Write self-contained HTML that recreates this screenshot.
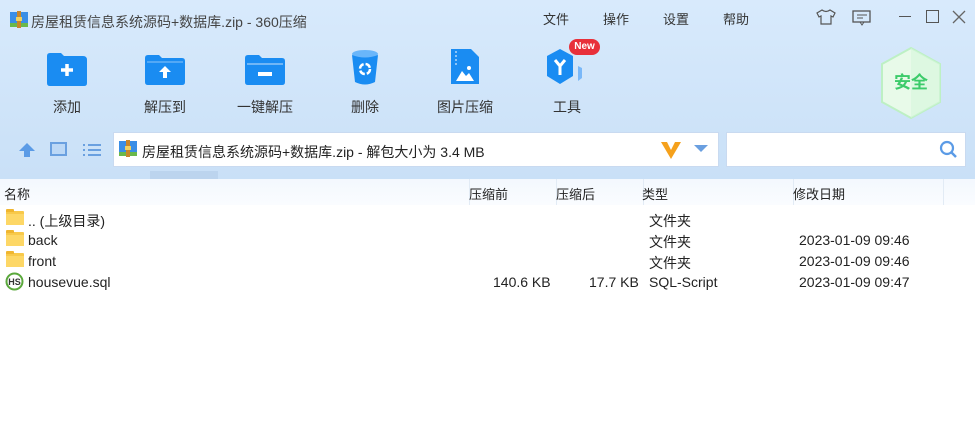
<!DOCTYPE html>
<html><head><meta charset="utf-8"><style>
*{margin:0;padding:0;box-sizing:border-box}
body{width:975px;height:436px;overflow:hidden;background:#fff;font-family:"Liberation Sans","Noto Sans CJK SC",sans-serif;color:#222;position:relative}
.top{position:absolute;left:0;top:0;width:975px;height:179px;background:linear-gradient(#d8eafc,#c9e0f7)}
.abs{position:absolute}
.t{font-size:14px;color:#333}
.tb{position:absolute;top:47px;width:80px;text-align:center}
.tb .lbl{position:absolute;top:50px;width:80px;text-align:center;font-size:14px;color:#333}
.hdr{position:absolute;top:179px;left:0;width:975px;height:26px;background:linear-gradient(#f3f8fe,#fafcff);font-size:13px}
.hdr span{position:absolute;top:5px}
.hdr i{position:absolute;top:0;width:1px;height:26px;background:#e2ebf5}
.row{position:absolute;left:0;height:21px;width:975px;font-size:14px}
.row span{position:absolute;top:2px}
.fold{position:absolute;left:6px;top:2px;width:18px;height:14px;background:#f8c94a;border-radius:1px}
.fold:before{content:"";position:absolute;left:0;top:-2px;width:8px;height:3px;background:#f0b630;border-radius:1px 1px 0 0}
.fold:after{content:"";position:absolute;left:0;top:3px;width:18px;height:11px;background:#fdd766}
</style></head><body>
<div class="top"></div>
<svg class="abs" style="left:10px;top:11px" width="18" height="17"><rect x="0" y="1" width="18" height="15" fill="#3a8ee6"/><rect x="0" y="12" width="18" height="4" fill="#6ab84a"/><rect x="7" y="0" width="4" height="17" fill="#c8862a"/><rect x="6" y="6" width="6" height="4" fill="#f0d060"/></svg>
<div class="abs" style="left:31px;top:12px;font-size:14px;color:#444">房屋租赁信息系统源码+数据库.zip - 360压缩</div>
<div class="abs t" style="left:543px;top:9px;font-size:13px">文件</div>
<div class="abs t" style="left:603px;top:9px;font-size:13px">操作</div>
<div class="abs t" style="left:663px;top:9px;font-size:13px">设置</div>
<div class="abs t" style="left:723px;top:9px;font-size:13px">帮助</div>
<svg class="abs" style="left:816px;top:9px" width="20" height="16"><path d="M6 1 L1 4 L3 8 L5 7 L5 15 L15 15 L15 7 L17 8 L19 4 L14 1 Q10 4 6 1Z" fill="none" stroke="#555" stroke-width="1.2"/></svg>
<svg class="abs" style="left:852px;top:10px" width="20" height="16"><rect x="1" y="1" width="17" height="11" fill="none" stroke="#555" stroke-width="1.3"/><path d="M5 5h10M5 8h6M8 12l2 3 2-3" stroke="#555" fill="none"/></svg>
<div class="abs" style="left:899px;top:16px;width:12px;height:1px;background:#555"></div>
<div class="abs" style="left:926px;top:10px;width:13px;height:13px;border:1.5px solid #555"></div>
<svg class="abs" style="left:952px;top:10px" width="14" height="14"><path d="M1 1L13 13M13 1L1 13" stroke="#666" stroke-width="1.3"/></svg>
<div class="tb" style="left:27px"><svg width="40" height="33" style="position:absolute;left:20px;top:6px"><path d="M0 3Q0 0 3 0H14L17 3H36Q40 3 40 7V30Q40 33 37 33H3Q0 33 0 30Z" fill="#1a8cf2"/><path d="M14 17h12M20 11v12" stroke="#fff" stroke-width="3.5"/></svg><div class="lbl">添加</div></div>
<div class="tb" style="left:125px"><svg width="40" height="30" style="position:absolute;left:20px;top:8px"><path d="M0 3Q0 0 3 0H14L17 3H37Q40 3 40 6V27Q40 30 37 30H3Q0 30 0 27Z" fill="#1a8cf2"/><path d="M2 7H38" stroke="#8cc4f8" stroke-width="1"/><path d="M20 11l-6 6h4v6h4v-6h4z" fill="#fff"/></svg><div class="lbl">解压到</div></div>
<div class="tb" style="left:225px"><svg width="40" height="30" style="position:absolute;left:20px;top:8px"><path d="M0 3Q0 0 3 0H14L17 3H37Q40 3 40 6V27Q40 30 37 30H3Q0 30 0 27Z" fill="#1a8cf2"/><path d="M2 9H38" stroke="#8cc4f8" stroke-width="1.5"/><rect x="13" y="17" width="14" height="4" fill="#fff"/></svg><div class="lbl">一键解压</div></div>
<div class="tb" style="left:325px"><svg width="28" height="36" style="position:absolute;left:26px;top:3px"><ellipse cx="14" cy="4" rx="13" ry="4" fill="#6ab6fa"/><path d="M1 5L4 32Q14 37 24 32L27 5Q14 10 1 5Z" fill="#1a8cf2"/><circle cx="14" cy="19" r="5" fill="none" stroke="#fff" stroke-width="2.5" stroke-dasharray="6 2"/></svg><div class="lbl">删除</div></div>
<div class="tb" style="left:425px"><svg width="28" height="36" style="position:absolute;left:26px;top:2px"><path d="M0 0H20L28 8V35H0Z" fill="#1a8cf2"/><path d="M5 2v2M5 6v2M5 10v2M5 14v2" stroke="#8cc4f8" stroke-width="2"/><path d="M5 32L11 22L15 27L18 24L23 32Z" fill="#fff"/><circle cx="18" cy="19" r="2" fill="#fff"/></svg><div class="lbl">图片压缩</div></div>
<div class="tb" style="left:527px"><svg width="36" height="38" style="position:absolute;left:20px;top:2px"><path d="M31 17l4 2v10l-4 3z" fill="#7ab8f8"/><path d="M13 0L26 7V27L13 35L0 27V7Z" fill="#1a8cf2"/><path d="M8 11L13 17L18 11M13 17V26" stroke="#fff" stroke-width="3" fill="none"/></svg>
<div style="position:absolute;left:42px;top:-8px;width:31px;height:16px;background:#e8303a;border-radius:8px;color:#fff;font-size:10px;line-height:16px;font-weight:bold">New</div>
<div class="lbl">工具</div></div>
<svg class="abs" style="left:880px;top:46px" width="62" height="74"><path d="M31 2L60 18V56L31 72L2 56V18Z" fill="#e8fae9" stroke="#bdf0c4" stroke-width="2"/><path d="M31 2L60 18V56L31 72Z" fill="#d6f6dc" opacity=".6"/><text x="31" y="42" text-anchor="middle" font-size="17" font-weight="bold" fill="#3ccb6a" font-family="Noto Sans CJK SC,sans-serif">安全</text></svg>
<svg class="abs" style="left:18px;top:142px" width="18" height="16"><path d="M9 1L1 9h5v6h6V9h5z" fill="#5b9be6"/></svg>
<div class="abs" style="left:50px;top:142px;width:17px;height:14px;border:2px solid #6aa0e0;background:#bcd8f6"></div>
<svg class="abs" style="left:83px;top:143px" width="18" height="14"><path d="M0 2h2M5 2h13M0 7h2M5 7h13M0 12h2M5 12h13" stroke="#6aa0e0" stroke-width="2"/></svg>
<div class="abs" style="left:113px;top:132px;width:606px;height:35px;background:#fff;border:1px solid #c9daf0"></div>
<svg class="abs" style="left:119px;top:140px" width="18" height="17"><rect x="0" y="1" width="18" height="15" fill="#3a8ee6"/><rect x="0" y="12" width="18" height="4" fill="#6ab84a"/><rect x="7" y="0" width="4" height="17" fill="#c8862a"/><rect x="6" y="6" width="6" height="4" fill="#f0d060"/></svg>
<div class="abs" style="left:142px;top:142px;font-size:14px;color:#222">房屋租赁信息系统源码+数据库.zip - 解包大小为 3.4 MB</div>
<svg class="abs" style="left:660px;top:140px" width="22" height="20"><path d="M1 2L11 19L21 2H15L11 10L7 2Z" fill="#f5a11c"/></svg>
<svg class="abs" style="left:694px;top:145px" width="14" height="8"><path d="M0 0H14L7 7Z" fill="#6a9fe0"/></svg>
<div class="abs" style="left:726px;top:132px;width:240px;height:35px;background:#fff;border:1px solid #c9daf0"></div>
<svg class="abs" style="left:939px;top:140px" width="20" height="20"><circle cx="8" cy="8" r="6" fill="none" stroke="#5b9be6" stroke-width="2.2"/><path d="M12 12l5 5" stroke="#5b9be6" stroke-width="2.5"/></svg>
<div class="abs" style="left:150px;top:171px;width:68px;height:8px;background:#bcd4ee"></div>
<div class="hdr">
<span style="left:4px">名称</span>
<i style="left:469px"></i><span style="left:469px">压缩前</span>
<i style="left:556px"></i><span style="left:556px">压缩后</span>
<i style="left:643px"></i><span style="left:642px">类型</span>
<i style="left:793px"></i><span style="left:793px">修改日期</span>
<i style="left:943px"></i>
</div>
<div class="row" style="top:209px"><div class="fold"></div><span style="left:28px">.. (上级目录)</span><span style="left:649px">文件夹</span></div>
<div class="row" style="top:230px"><div class="fold"></div><span style="left:28px">back</span><span style="left:649px">文件夹</span><span style="left:799px">2023-01-09 09:46</span></div>
<div class="row" style="top:251px"><div class="fold"></div><span style="left:28px">front</span><span style="left:649px">文件夹</span><span style="left:799px">2023-01-09 09:46</span></div>
<div class="row" style="top:272px"><svg style="position:absolute;left:5px;top:0px" width="19" height="19"><circle cx="9.5" cy="9.5" r="9" fill="#5aa83c"/><circle cx="9.5" cy="9.5" r="7" fill="#fff"/><text x="9.5" y="13" text-anchor="middle" font-size="9" font-weight="bold" fill="#333" font-family="Liberation Sans">HS</text></svg><span style="left:28px">housevue.sql</span><span style="left:493px">140.6 KB</span><span style="left:589px">17.7 KB</span><span style="left:649px">SQL-Script</span><span style="left:799px">2023-01-09 09:47</span></div>
</body></html>
